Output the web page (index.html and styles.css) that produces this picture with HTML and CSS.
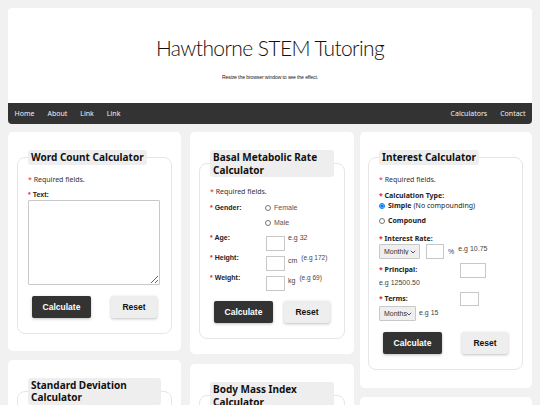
FILE: index.html
```html
<!DOCTYPE html>
<html>
<head>
<meta charset="utf-8">
<link rel="stylesheet" href="styles.css">
</head>
<body>
<div class="header">
  <div class="banner">
    <h1 class="title">Hawthorne STEM Tutoring</h1>
    <p class="subtitle">Resize the browser window to see the effect.</p>
  </div>
  <nav class="nav">
    <a class="nav-link">Home</a>
    <a class="nav-link">About</a>
    <a class="nav-link">Link</a>
    <a class="nav-link">Link</a>
    <span class="nav-spacer"></span>
    <a class="nav-link">Calculators</a>
    <a class="nav-link">Contact</a>
  </nav>
</div>

<div class="columns">
  <div class="col col-1">
    <div class="card">
      <fieldset class="fs">
        <legend class="lg">Word Count Calculator</legend>
        <p class="req first"><span class="star">*</span> Required fields.</p>
        <p class="alabel mt5"><span class="star">*</span> Text:</p>
        <textarea class="ta"></textarea>
        <div class="btns mt11">
          <button class="btn calc">Calculate</button>
          <button class="btn reset">Reset</button>
        </div>
      </fieldset>
    </div>
    <div class="card">
      <fieldset class="fs">
        <legend class="lg">Standard Deviation Calculator</legend>
        <p class="req first"><span class="star">*</span> Required fields.</p>
      </fieldset>
    </div>
  </div>

  <div class="col col-2">
    <div class="card card-2">
      <fieldset class="fs">
        <legend class="lg">Basal Metabolic Rate Calculator</legend>
        <p class="req first"><span class="star">*</span> Required fields.</p>
        <div class="brow gender">
          <span class="alabel bl"><span class="star">*</span> Gender:</span>
          <div class="radios">
            <label class="rlab"><input type="radio" name="g" class="radio"> Female</label>
            <label class="rlab r2"><input type="radio" name="g" class="radio"> Male</label>
          </div>
        </div>
        <div class="brow mrow">
          <span class="alabel bl"><span class="star">*</span> Age:</span>
          <input class="box w19 dn">
          <span class="hint">e.g 32</span>
        </div>
        <div class="brow mrow">
          <span class="alabel bl"><span class="star">*</span> Height:</span>
          <input class="box w19 dn">
          <span class="unit">cm</span><span class="hint small">(e.g 172)</span>
        </div>
        <div class="brow mrow">
          <span class="alabel bl"><span class="star">*</span> Weight:</span>
          <input class="box w19 dn">
          <span class="unit">kg</span><span class="hint small">(e.g 69)</span>
        </div>
        <div class="btns mt8">
          <button class="btn calc">Calculate</button>
          <button class="btn reset">Reset</button>
        </div>
      </fieldset>
    </div>
    <div class="card">
      <fieldset class="fs">
        <legend class="lg">Body Mass Index Calculator</legend>
        <p class="req first"><span class="star">*</span> Required fields.</p>
      </fieldset>
    </div>
  </div>

  <div class="col col-3">
    <div class="card card-3">
      <fieldset class="fs">
        <legend class="lg">Interest Calculator</legend>
        <p class="req first"><span class="star">*</span> Required fields.</p>
        <p class="nlabel mt6"><span class="star">*</span> Calculation Type:</p>
        <label class="rlab nb"><input type="radio" name="t" class="radio" checked> Simple <span class="nn">(No compounding)</span></label>
        <label class="rlab nb r2"><input type="radio" name="t" class="radio"> Compound</label>
        <p class="nlabel mt8"><span class="star">*</span> Interest Rate:</p>
        <div class="irow">
          <span class="selwrap w41">
            <select class="sel"><option>Monthly</option></select>
            <svg class="chev" viewBox="0 0 6 4" width="6" height="4"><path d="M0.8 0.8 L3 3 L5.2 0.8" fill="none" stroke="#555" stroke-width="1"/></svg>
          </span>
          <input class="box w18">
          <span class="unit pct">%</span>
          <span class="hint up">e.g 10.75</span>
        </div>
        <div class="grow mt4">
          <span class="nlabel"><span class="star">*</span> Principal:</span>
          <input class="box w26">
        </div>
        <p class="hint line">e.g 12500.50</p>
        <div class="grow mt4">
          <span class="nlabel"><span class="star">*</span> Terms:</span>
          <input class="box w19 h13">
        </div>
        <div class="irow">
          <span class="selwrap w37">
            <select class="sel"><option>Months</option></select>
            <svg class="chev" viewBox="0 0 6 4" width="6" height="4"><path d="M0.8 0.8 L3 3 L5.2 0.8" fill="none" stroke="#555" stroke-width="1"/></svg>
          </span>
          <span class="hint">e.g 15</span>
        </div>
        <div class="btns mt11">
          <button class="btn calc">Calculate</button>
          <button class="btn reset">Reset</button>
        </div>
      </fieldset>
    </div>
    <div class="card">
      <fieldset class="fs">
        <legend class="lg">Loan Calculator</legend>
      </fieldset>
    </div>
  </div>
</div>
</body>
</html>
```
FILE: styles.css
```css
html, body {
  margin: 0;
}
body {
  background: #f1f1f1;
  padding: 8px;
  font-family: "Noto Sans", "Open Sans", sans-serif;
  color: #222;
  height: 405px;
  box-sizing: border-box;
  overflow: hidden;
}
.header {
  background: #fff;
  border-radius: 4px;
}
.banner {
  height: 95px;
  box-sizing: border-box;
  padding-top: 27px;
  text-align: center;
}
.title {
  margin: 0;
  font-family: Lato, sans-serif;
  font-weight: 300;
  font-size: 21px;
  line-height: 26px;
  color: #111;
  letter-spacing: -0.6px;
}
.subtitle {
  margin: 12px 0 0;
  font-family: "Liberation Sans Narrow", "Liberation Sans", sans-serif;
  font-size: 5.2px;
  line-height: 8px;
  color: #222;
  letter-spacing: -0.15px;
}
.nav {
  display: flex;
  align-items: center;
  height: 21px;
  background: #333;
  border-radius: 0 0 4px 4px;
}
.nav-link {
  color: #f1f1f1;
  font-size: 7px;
  padding: 0 6.5px;
  line-height: 21px;
}
.nav-spacer {
  flex: 1;
}
.columns {
  display: flex;
  align-items: flex-start;
  margin-top: 8px;
}
.col {
  display: flex;
  flex-direction: column;
  gap: 9px;
}
.col-1 { width: 173px; }
.col-2 { width: 164px; margin-left: 9px; gap: 10px; }
.col-3 { width: 172px; margin-left: 6px; }
.card {
  background: #fff;
  border-radius: 5px;
  padding: 18px 9px 17px;
}
.card-2 {
  padding-bottom: 15px;
}
.card-3 {
  padding: 18px 9px 18px 8px;
}
.fs {
  margin: 0;
  border: 1px solid #e6e6e6;
  border-radius: 8px;
  padding: 0 10px 15px;
  min-width: 0;
}
.lg {
  background: #eeeeee;
  border-radius: 3px;
  padding: 1px 3px;
  font-weight: 700;
  font-size: 10px;
  line-height: 12.5px;
  color: #111;
}
p { margin: 0; }
.req {
  font-size: 7px;
  line-height: 10px;
  color: #333;
}
.first { margin-top: 10px; }
.star { color: #e0262b; }
.alabel {
  font-family: "Liberation Sans", Arial, sans-serif;
  font-weight: 700;
  font-size: 7px;
  line-height: 10px;
  color: #222;
}
.nlabel {
  font-weight: 700;
  font-size: 7px;
  line-height: 10px;
  color: #222;
}
.mt4 { margin-top: 4px; }
.mt5 { margin-top: 5px; }
.mt6 { margin-top: 6px; }
.mt8 { margin-top: 8px; }
.mt11 { margin-top: 11px; }
.ta {
  display: block;
  box-sizing: border-box;
  width: 132px;
  height: 85px;
  margin: 0;
  border: 1px solid #c8c8c8;
  border-radius: 1px;
  resize: vertical;
}
.btns {
  display: flex;
  justify-content: space-between;
  padding: 0 4px;
}
.btn {
  font-family: "Liberation Sans", Arial, sans-serif;
  font-weight: 700;
  font-size: 8.5px;
  height: 22px;
  border: none;
  border-radius: 2px;
  padding: 0;
  box-shadow: 0 1px 3px rgba(0,0,0,0.25);
}
.calc {
  width: 59px;
  background: #333;
  color: #fff;
}
.reset {
  width: 46px;
  background: #eeeeee;
  color: #111;
}
.brow {
  display: flex;
  align-items: flex-start;
}
.bl {
  width: 55px;
  flex: none;
}
.gender { margin-top: 6px; }
.radios {
  display: flex;
  flex-direction: column;
}
.rlab {
  display: flex;
  align-items: center;
  font-family: "Liberation Sans", Arial, sans-serif;
  font-size: 7px;
  line-height: 10px;
  color: #555;
}
.rlab.nb {
  font-family: "Noto Sans", sans-serif;
  font-weight: 700;
  color: #222;
}
.nn { font-weight: 400; margin-left: 2px; }
.r2 { margin-top: 5px; }
.radio {
  width: 6px;
  height: 6px;
  margin: 0 3px 0 0;
}
.mrow {
  margin-top: 5px;
  height: 20px;
}
.mrow + .mrow { margin-top: 0; }
.box {
  box-sizing: border-box;
  height: 15px;
  border: 1px solid #c8c8c8;
  margin: 0;
  padding: 0;
  background: #fff;
  flex: none;
}
.dn { margin-top: 3px; margin-left: 1px; }
.w18 { width: 18px; }
.w19 { width: 19px; }
.w26 { width: 26px; }
.h13 { height: 14px; }
.hint {
  font-family: "Liberation Sans", Arial, sans-serif;
  font-size: 7px;
  line-height: 10px;
  color: #444;
  margin-left: 3px;
}
.hint.small {
  font-size: 6.5px;
  margin-left: 4px;
}
.unit {
  font-family: "Liberation Sans", Arial, sans-serif;
  font-size: 7px;
  line-height: 10px;
  color: #444;
  margin-left: 3px;
  margin-top: 3px;
}
.irow {
  display: flex;
  align-items: center;
}
.irow .unit { margin-top: 2px; margin-left: 4px; }
.hint.up { margin-left: 4px; margin-top: -4px; }
.irow .box { margin-left: 6px; }
.selwrap {
  position: relative;
  display: inline-block;
  height: 15px;
  flex: none;
}
.w41 { width: 41px; }
.w37 { width: 37px; }
.sel {
  -webkit-appearance: none;
  appearance: none;
  box-sizing: border-box;
  width: 100%;
  height: 15px;
  font-family: "Liberation Sans", Arial, sans-serif;
  font-size: 7px;
  background: #efefef;
  border: 1px solid #c8c8c8;
  border-radius: 1px;
  padding: 0 0 0 4px;
  margin: 0;
  color: #333;
  display: block;
}
.chev {
  position: absolute;
  right: 4px;
  top: 6px;
}
.grow {
  display: grid;
  grid-template-columns: 81px auto;
  align-items: center;
}
.hint.line {
  margin-left: 0;
}
```
